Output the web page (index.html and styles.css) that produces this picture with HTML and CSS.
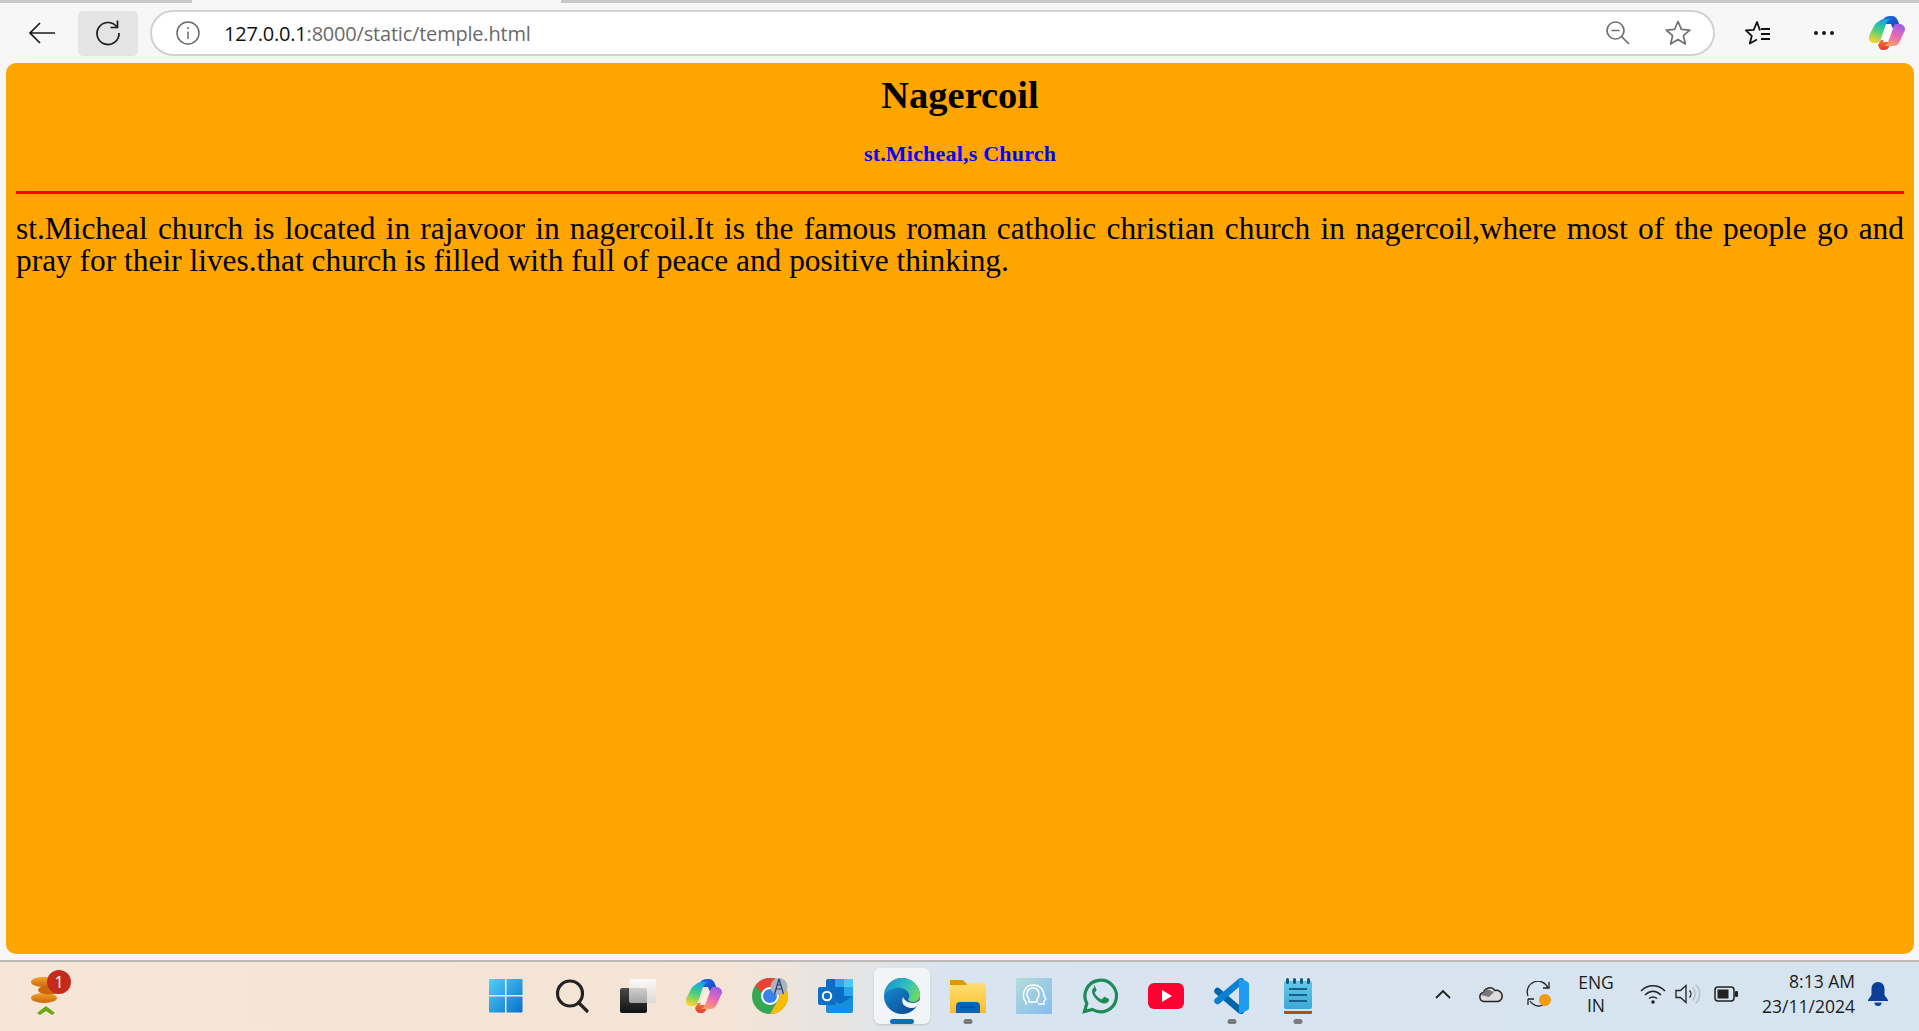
FILE: index.html
```html
<!DOCTYPE html>
<html lang="en">
<head>
<meta charset="UTF-8">
<meta name="viewport" content="width=device-width, initial-scale=1.0">
<title>temple</title>
<link rel="stylesheet" href="styles.css">
</head>
<body>

<div class="tab-strip">
    <div class="tab-edge tab-edge-left"></div>
    <div class="tab-gap"></div>
    <div class="tab-edge tab-edge-right"></div>
</div>

<header class="toolbar">
    <button class="tool tool-back">
        <svg width="30" height="30" viewBox="0 0 30 30" fill="none" stroke="#1c1c1c" stroke-width="1.7"><path d="M3 15H28M13 5 3 15 13 25"/></svg>
    </button>
    <button class="tool tool-reload">
        <svg width="30" height="30" viewBox="0 0 30 30" fill="none" stroke="#1c1c1c" stroke-width="1.7"><path d="M23.500 8.500A11 11 0 1 0 26 15M24.500 2.500V9.500H17.500"/></svg>
    </button>
    <div class="address-bar">
        <svg class="site-info" width="26" height="26" viewBox="0 0 26 26" fill="none" stroke="#6a6a6a" stroke-width="1.5"><circle cx="13" cy="13" r="11"/><path d="M13 11.500V19M13 7V9"/></svg>
        <div class="url"><span class="url-host">127.0.0.1</span>:8000/static/temple.html</div>
        <svg class="zoom-out" width="28" height="28" viewBox="0 0 28 28" fill="none" stroke="#6f6f6f" stroke-width="1.7"><circle cx="11.500" cy="11.500" r="8.500"/><path d="M7.500 11.500H15.500M17.500 17.500 25 25"/></svg>
        <svg class="star" width="28" height="28" viewBox="0 0 28 28" fill="none" stroke="#6f6f6f" stroke-width="1.7" stroke-linejoin="round"><path d="M14 2.500 17.400 10.400 25.800 11.100 19.400 16.700 21.400 25 14 20.600 6.600 25 8.600 16.700 2.200 11.100 10.600 10.400Z"/></svg>
    </div>
    <button class="tool tool-fav">
        <svg width="28" height="28" viewBox="0 0 28 28" fill="none" stroke="#111" stroke-width="1.8" stroke-linejoin="round"><path d="M16 11.500 13 3 9.700 10.800 1.800 11.400 7.800 16.800 5.800 24.500 13 20.500M17 10H26M17 15H26M17 20H26"/></svg>
    </button>
    <button class="tool tool-more">
        <svg width="22" height="6" viewBox="0 0 22 6" fill="#1a1a1a"><circle cx="3" cy="3" r="2"/><circle cx="11" cy="3" r="2"/><circle cx="19" cy="3" r="2"/></svg>
    </button>
    <div class="copilot-btn">
        <svg width="36" height="36" viewBox="0 0 36 36">
            <defs>
                <linearGradient id="cpTop" x1="0" y1="0" x2="1" y2="1"><stop offset="0" stop-color="#1c6fe0"/><stop offset="1" stop-color="#1d3fb8"/></linearGradient>
                <linearGradient id="cpLeft" x1="0.6" y1="0" x2="0.3" y2="1"><stop offset="0" stop-color="#16a0ea"/><stop offset=".45" stop-color="#3fcf86"/><stop offset="1" stop-color="#f8d62e"/></linearGradient>
                <linearGradient id="cpRight" x1="0.7" y1="0" x2="0.3" y2="1"><stop offset="0" stop-color="#a05ce4"/><stop offset=".55" stop-color="#ec6cb4"/><stop offset="1" stop-color="#f9a25a"/></linearGradient>
                <linearGradient id="cpLow" x1="0" y1="0" x2="0" y2="1"><stop offset="0" stop-color="#f8733c"/><stop offset="1" stop-color="#e23a34"/></linearGradient>
            </defs>
            <path fill="url(#cpTop)" d="M14 5C15 2 18 1 21 1H23C26 1 28 3 29 6L32 14H24L22 9H14Z"/>
            <path fill="url(#cpLow)" d="M12 25H22L21 30C20 33 18 35 15 35H14C11 35 10 33 9 30Z"/>
            <path fill="url(#cpLeft)" d="M9 7C11 5 13 4 16 4H22C19 5 18 7 17 9L12 24C11 27 9 28 7 28H5C2 28 0 26 0 23 0 22 0 21 1 19L5 11C6 9 7 8 9 7Z"/>
            <path fill="url(#cpRight)" d="M27 9H30C33 9 36 11 36 14 36 15 36 16 35 17L31 26C29 30 27 31 23 31H14C17 31 18 29 19 27L24 13C25 10 26 9 27 9Z"/>
            <path fill="#fff" d="M19 13H24L19 27H14Z"/>
        </svg>
    </div>
</header>

<main class="page">
    <h1 class="place">Nagercoil</h1>
    <h3 class="church">st.Micheal,s Church</h3>
    <hr class="rule">
    <p class="about">st.Micheal church is located in rajavoor in nagercoil.It is the famous roman catholic christian church in nagercoil,where most of the people go and pray for their lives.that church is filled with full of peace and positive thinking.</p>
</main>

<footer class="taskbar">
    <div class="task-left">
        <svg width="36" height="44" viewBox="0 0 36 44">
            <defs><linearGradient id="coin" x1="0" y1="0" x2="0" y2="1"><stop offset="0" stop-color="#f4a22a"/><stop offset="1" stop-color="#c9670c"/></linearGradient></defs>
            <ellipse cx="14" cy="25" rx="13" ry="5" fill="url(#coin)"/>
            <ellipse cx="19" cy="17" rx="11" ry="4.500" fill="#c9670c"/>
            <ellipse cx="13" cy="9" rx="12" ry="5" fill="url(#coin)"/>
            <path d="M7 40l9-7 9 7-3 2-6-4-6 4z" fill="#6aa80f"/>
        </svg>
        <span class="badge">1</span>
    </div>

    <div class="task-apps">
        <div class="app">
            <svg width="36" height="36" viewBox="0 0 36 36">
                <defs><linearGradient id="win" x1="0" y1="0" x2="1" y2="1"><stop offset="0" stop-color="#4fd0f8"/><stop offset="1" stop-color="#0a70cc"/></linearGradient></defs>
                <path fill="url(#win)" d="M1 2a1 1 0 0 1 1-1h15v16H1zM18.500 1h15a1 1 0 0 1 1 1v15h-16zM1 18.500h16v16H2a1 1 0 0 1-1-1zM18.500 18.500h16v15a1 1 0 0 1-1 1h-15z"/>
            </svg>
        </div>
        <div class="app">
            <svg width="36" height="36" viewBox="0 0 36 36" fill="none" stroke="#222" stroke-width="3.200" stroke-linecap="round"><circle cx="16" cy="15.500" r="12.500"/><path d="M25 25l8 8"/></svg>
        </div>
        <div class="app">
            <svg width="38" height="36" viewBox="0 0 38 36">
                <defs>
                    <linearGradient id="tvA" x1="0" y1="0" x2="0" y2="1"><stop offset="0" stop-color="#4a4a4a"/><stop offset="1" stop-color="#111"/></linearGradient>
                    <linearGradient id="tvB" x1="0" y1="0" x2="0" y2="1"><stop offset="0" stop-color="#fff"/><stop offset="1" stop-color="#d4d4d4" stop-opacity=".85"/></linearGradient>
                </defs>
                <rect x="1" y="10" width="27" height="25" rx="2" fill="url(#tvA)"/>
                <rect x="10" y="1" width="27" height="24" rx="2" fill="url(#tvB)" opacity=".85"/>
            </svg>
        </div>
        <div class="app">
            <svg width="36" height="36" viewBox="0 0 36 36">
                <path fill="url(#cpTop)" d="M14 5C15 2 18 1 21 1H23C26 1 28 3 29 6L32 14H24L22 9H14Z"/>
                <path fill="url(#cpLow)" d="M12 25H22L21 30C20 33 18 35 15 35H14C11 35 10 33 9 30Z"/>
                <path fill="url(#cpLeft)" d="M9 7C11 5 13 4 16 4H22C19 5 18 7 17 9L12 24C11 27 9 28 7 28H5C2 28 0 26 0 23 0 22 0 21 1 19L5 11C6 9 7 8 9 7Z"/>
                <path fill="url(#cpRight)" d="M27 9H30C33 9 36 11 36 14 36 15 36 16 35 17L31 26C29 30 27 31 23 31H14C17 31 18 29 19 27L24 13C25 10 26 9 27 9Z"/>
                <path fill="#fbeee2" d="M19 13H24L19 27H14Z"/>
            </svg>
        </div>
        <div class="app">
            <svg width="36" height="36" viewBox="0 0 36 36">
                <circle cx="18" cy="18" r="18" fill="#34a853"/>
                <path fill="#ea4335" d="M18 0a18 18 0 0 1 15.600 9H18a9 9 0 0 0-8.500 6L3.400 7.500A18 18 0 0 1 18 0z"/>
                <path fill="#fbbc04" d="M33.600 9A18 18 0 0 1 18 36l7.800-13.500A9 9 0 0 0 25 11z"/>
                <circle cx="18" cy="18" r="9" fill="#fff"/>
                <circle cx="18" cy="18" r="7" fill="#3b82ea"/>
                <circle cx="27" cy="8.500" r="8.500" fill="#a9b4bd"/>
                <path fill="none" stroke="#2a3a78" stroke-width="1.200" d="M27 1 22.500 16M27 1 31.500 16M24 11H30M25 7H29"/>
            </svg>
        </div>
        <div class="app">
            <svg width="36" height="36" viewBox="0 0 36 36">
                <rect x="8" y="1" width="27" height="32" rx="2" fill="#0a6cc4"/>
                <path fill="#28a8ea" d="M17 1h9v8h-9zM26 9h9v9h-9z"/>
                <path fill="#50c8f4" d="M26 1h9v8h-9z"/>
                <path fill="#1490df" d="M8 17l14 9 13-8v15a2 2 0 0 1-2 2H10a2 2 0 0 1-2-2z"/>
                <rect x="0" y="9" width="18" height="18" rx="2" fill="#0e6fc8"/>
                <circle cx="9" cy="18" r="4.200" fill="none" stroke="#fff" stroke-width="2"/>
            </svg>
        </div>
        <div class="app app-active">
            <svg width="36" height="36" viewBox="0 0 36 36">
                <defs>
                    <linearGradient id="edgeA" x1="0" y1="0.3" x2="1" y2="0.7"><stop offset="0" stop-color="#1496d4"/><stop offset=".55" stop-color="#35c1b8"/><stop offset="1" stop-color="#72dc5c"/></linearGradient>
                    <linearGradient id="edgeB" x1="0" y1="0" x2="0.8" y2="1"><stop offset="0" stop-color="#1a93dc"/><stop offset="1" stop-color="#0b4c92"/></linearGradient>
                </defs>
                <circle cx="18" cy="18" r="18" fill="url(#edgeB)"/>
                <path fill="#f2f5f8" d="M19 19C20 22 24 25 29 25 31 25 34 24 36 22 35 25 34 27 32 29 28 31 22 30 19 26 18 24 18 21 19 19Z"/>
                <path fill="url(#edgeA)" d="M1 16C3 6 10 0 18 0 28 0 36 8 36 17 36 21 33 24 29 24 26 24 24 23 24 21 25 20 26 19 25 16 23 11 17 9 12 10 7 11 3 13 1 16Z"/>
            </svg>
            <span class="running-wide"></span>
        </div>
        <div class="app">
            <svg width="36" height="36" viewBox="0 0 36 36">
                <defs><linearGradient id="fold" x1="0" y1="0" x2="0" y2="1"><stop offset="0" stop-color="#ffdf70"/><stop offset="1" stop-color="#f9bd2e"/></linearGradient></defs>
                <path fill="#d89a06" d="M0 3a1 1 0 0 1 1-1h12l4 4h19v8H0z"/>
                <path fill="url(#fold)" d="M0 7h16l3-2h17v30H0z"/>
                <path fill="#0b63b6" d="M6 35v-7a4 4 0 0 1 4-4h16a4 4 0 0 1 4 4v7z"/>
                <path stroke="#094e94" stroke-width="1.500" d="M10 29h15"/>
            </svg>
            <span class="running"></span>
        </div>
        <div class="app">
            <svg width="36" height="36" viewBox="0 0 36 36">
                <defs><linearGradient id="lens" x1="0" y1="0" x2="1" y2="1"><stop offset="0" stop-color="#b4dcd8"/><stop offset="1" stop-color="#84bcf0"/></linearGradient></defs>
                <rect width="36" height="36" fill="url(#lens)"/>
                <path fill="none" stroke="#fff" stroke-width="1.400" d="M10 27V24C6 20 6 7 17 7c9 0 11 7 11 11l2 3-2 2v3h-6M13 21c-3-3-3-11 4-11 7 0 7 8 4 11v3h-8z"/>
            </svg>
        </div>
        <div class="app">
            <svg width="36" height="36" viewBox="0 0 36 36">
                <path fill="none" stroke="#1f8a58" stroke-width="3.200" d="M2.500 33.500 4.800 25.500A15.800 15.800 0 1 1 10.500 31.500Z"/>
                <path fill="#1f8a58" d="M12.500 9.500c-1 0-2.500 1.500-2.500 4 0 2.500 2 5.500 4.500 8 2.500 2.500 5.500 4 8 4 2.500 0 4-1.500 4.500-3 .2-1 0-1.500-.5-1.800l-3.500-1.700c-.7-.3-1-.2-1.500.4l-1.300 1.500c-.4.400-.8.400-1.400.1-2.500-1.200-4.500-3-5.800-5.500-.3-.6-.2-1 .2-1.400l1-1.200c.4-.5.400-.8.200-1.400l-1.400-3.300c-.3-.6-.6-.7-1.500-.7z"/>
            </svg>
        </div>
        <div class="app">
            <svg width="36" height="26" viewBox="0 0 36 26">
                <rect width="36" height="26" rx="6" fill="#ff0033"/>
                <path fill="#fff" d="M14 7l10 6-10 6z"/>
            </svg>
        </div>
        <div class="app">
            <svg width="36" height="36" viewBox="0 0 36 36" fill="none" stroke-width="6.500" stroke-linecap="round">
                <path stroke="#0065a9" d="M3.500 13 27 33"/>
                <path stroke="#0a80d4" d="M27 3 3.500 23"/>
                <path fill="#1f9cf0" stroke="none" d="M25 0 33 3.500C34.500 4 35 5 35 6.500V29.500C35 31 34.500 32 33 32.500L25 36Z"/>
            </svg>
            <span class="running"></span>
        </div>
        <div class="app">
            <svg width="30" height="36" viewBox="0 0 30 36">
                <defs><linearGradient id="note" x1="0" y1="0" x2="0" y2="1"><stop offset="0" stop-color="#64c8e8"/><stop offset="1" stop-color="#3ca8d4"/></linearGradient></defs>
                <rect x="1" y="31" width="28" height="5" rx="1" fill="#a9540f"/>
                <rect x="1" y="30" width="28" height="3" fill="#e0dcd4"/>
                <rect x="1" y="3" width="28" height="28" rx="2" fill="url(#note)"/>
                <path stroke="#0a5c88" stroke-width="3" stroke-linecap="round" d="M4.500 1.500v3M11.500 1.500v3M18.500 1.500v3M25.500 1.500v3"/>
                <path stroke="#14628c" stroke-width="1.800" d="M6 11H24M6 17H24M6 23H24"/>
            </svg>
            <span class="running"></span>
        </div>
    </div>

    <div class="task-tray">
        <svg class="tray-chevron" width="16" height="10" viewBox="0 0 16 10" fill="none" stroke="#222" stroke-width="1.800"><path d="M1 9 8 2 15 9"/></svg>
        <svg class="tray-cloud" width="26" height="18" viewBox="0 0 26 18"><path fill="#dcdcdc" stroke="#222" stroke-width="1.500" d="M6 16.500A4.500 4.500 0 0 1 5.500 7.600 6.500 6.500 0 0 1 17 5.500 5.500 5.500 0 0 1 20 16.500Z"/><path fill="#777" d="M3 10 9 4l7 3-5 5z"/></svg>
        <svg class="tray-sync" width="26" height="26" viewBox="0 0 26 26" fill="none" stroke="#222" stroke-width="1.300"><path d="M2 15A10 10 0 0 1 22 7M23 1V7H17M2 18V24M2 18H8M4 20A10 10 0 0 0 17 24"/><circle cx="19" cy="19" r="6" fill="#f59a0c" stroke="none"/></svg>
        <div class="tray-lang">ENG<br>IN</div>
        <svg class="tray-wifi" width="26" height="20" viewBox="0 0 26 20" fill="none" stroke="#222" stroke-width="1.500"><path d="M1 7C8 0 18 0 25 7M5 11C10 6 16 6 21 11M9 14.500C11.500 12.500 14.500 12.500 17 14.500"/><circle cx="13" cy="18" r="1.800" fill="#222" stroke="none"/></svg>
        <svg class="tray-sound" width="26" height="24" viewBox="0 0 26 24" fill="none" stroke="#222" stroke-width="1.300"><path d="M1 8.500H5.500L11 3.500V20.500L5.500 15.500H1Z"/><path d="M14.500 8.500A5 5 0 0 1 14.500 15.500"/><path stroke="#b5bcc4" d="M17.500 5.500A9 9 0 0 1 17.500 18.500M20.500 2.500A13 13 0 0 1 20.500 21.500"/></svg>
        <svg class="tray-battery" width="24" height="16" viewBox="0 0 24 16"><rect x="1" y="1" width="19" height="14" rx="3" fill="none" stroke="#222" stroke-width="1.500"/><rect x="3.500" y="3.500" width="11" height="9" fill="#222"/><rect x="21" y="5" width="3" height="6" rx="1" fill="#222"/></svg>
        <div class="tray-clock">8:13 AM<br>23/11/2024</div>
        <svg class="tray-bell" width="22" height="24" viewBox="0 0 22 24"><path fill="#0c3f98" d="M11 0c-4 0-6.500 3-6.500 7v6L1 18v1h20v-1l-3.500-5V7C17.500 3 15 0 11 0zM7.500 20.500h7A3.500 3.500 0 0 1 7.500 20.500z"/></svg>
    </div>
</footer>

</body>
</html>
```

FILE: styles.css
```css
* {
    box-sizing: border-box;
}
html, body {
    height: 100%;
}
body {
    margin: 0;
    display: flex;
    flex-direction: column;
    overflow: hidden;
    background-color: #f7f7f7;
    font-family: 'Open Sans', 'Noto Sans', sans-serif;
}

/* browser chrome */
.tab-strip {
    display: flex;
    height: 3px;
    flex: none;
}
.tab-edge {
    background-color: #c8c8c8;
}
.tab-edge-left {
    width: 192px;
}
.tab-gap {
    width: 369px;
    background-color: #f7f7f7;
}
.tab-edge-right {
    flex: 1;
}
.toolbar {
    display: flex;
    align-items: center;
    height: 60px;
    flex: none;
}
.tool {
    display: flex;
    justify-content: center;
    align-items: center;
    flex: none;
    padding: 0;
    border: none;
    border-radius: 5px;
    background: none;
}
.tool-back {
    width: 30px;
    height: 30px;
    margin-left: 27px;
}
.tool-reload {
    width: 60px;
    height: 45px;
    margin-left: 21px;
    background-color: #e4e4e4;
}
.address-bar {
    display: flex;
    align-items: center;
    width: 1565px;
    height: 46px;
    flex: none;
    margin-left: 12px;
    padding-left: 23px;
    padding-right: 21px;
    background-color: #fff;
    border: 2px solid #d2d2d2;
    border-radius: 23px;
}
.url {
    flex: 1;
    margin-left: 23px;
    font-size: 20px;
    letter-spacing: -0.2px;
    color: #6a6a6a;
}
.url-host {
    color: #111;
}
.star {
    margin-left: 32px;
}
.tool-fav {
    width: 28px;
    height: 28px;
    margin-left: 29px;
}
.tool-more {
    width: 22px;
    height: 28px;
    margin-left: 41px;
}
.copilot-btn {
    display: flex;
    flex: none;
    margin-left: 34px;
}

/* the page itself */
.page {
    flex: 1;
    margin: 0 5px 6px 6px;
    padding: 10px;
    background-color: orange;
    border-radius: 10px;
    font-family: 'Liberation Serif', serif;
}
.place {
    margin: 0;
    font-size: 38.500px;
    line-height: 44px;
    text-align: center;
    color: #000;
}
.church {
    margin: 24px 0 0;
    font-size: 22px;
    line-height: 26px;
    letter-spacing: 0.2px;
    text-align: center;
    color: #0000ff;
}
.rule {
    height: 3px;
    margin: 24px 0 0;
    border: none;
    background-color: #f00;
}
.about {
    margin: 19px 0 0;
    font-size: 31.400px;
    line-height: 32px;
    text-align: justify;
    color: #000;
}

/* windows taskbar */
.taskbar {
    position: relative;
    display: flex;
    align-items: center;
    height: 71px;
    flex: none;
    border-top: 2px solid #bdb9b6;
    background: linear-gradient(90deg, #f6e6d8 0%, #f4e4d6 38%, #d8e4f0 50%, #d6e4f0 100%);
    color: #1c1c1c;
}
.task-left {
    position: relative;
    width: 473px;
    flex: none;
    height: 69px;
    padding: 11px 0 0 30px;
}
.badge {
    position: absolute;
    left: 47px;
    top: 8px;
    width: 24px;
    height: 24px;
    border-radius: 50%;
    background-color: #c42b1c;
    color: #fff;
    font-size: 16px;
    line-height: 24px;
    text-align: center;
}
.task-apps {
    display: flex;
    align-self: flex-start;
    width: 860px;
    flex: none;
    margin-top: 6px;
}
.app {
    position: relative;
    display: flex;
    justify-content: center;
    align-items: center;
    width: 66px;
    height: 56px;
    flex: none;
    border-radius: 6px;
}
.app-active {
    width: 56px;
    margin: 0 5px;
    background-color: #f2f5f8;
    box-shadow: 0 1px 2px rgba(0, 0, 0, 0.15);
}
.running,
.running-wide {
    position: absolute;
    bottom: 0;
    left: 50%;
    transform: translateX(-50%);
    height: 5px;
    border-radius: 3px;
}
.running {
    width: 9px;
    background-color: #7a7a7a;
}
.running-wide {
    width: 24px;
    background-color: #0a6fc4;
}
.task-tray {
    display: flex;
    align-items: center;
    flex: 1;
    height: 100%;
    padding-bottom: 5px;
    font-family: 'Open Sans', 'Noto Sans', sans-serif;
    font-size: 17.500px;
    line-height: 25px;
}
.tray-chevron {
    margin-left: 102px;
}
.tray-cloud {
    margin-left: 27px;
}
.tray-sync {
    margin-left: 22px;
}
.tray-lang {
    width: 40px;
    margin-left: 24px;
    line-height: 23px;
    text-align: center;
}
.tray-wifi {
    margin-left: 24px;
}
.tray-sound {
    margin-left: 9px;
}
.tray-battery {
    margin-left: 13px;
}
.tray-clock {
    width: 100px;
    margin-left: 17px;
    text-align: right;
}
.tray-bell {
    margin-left: 12px;
}
```
